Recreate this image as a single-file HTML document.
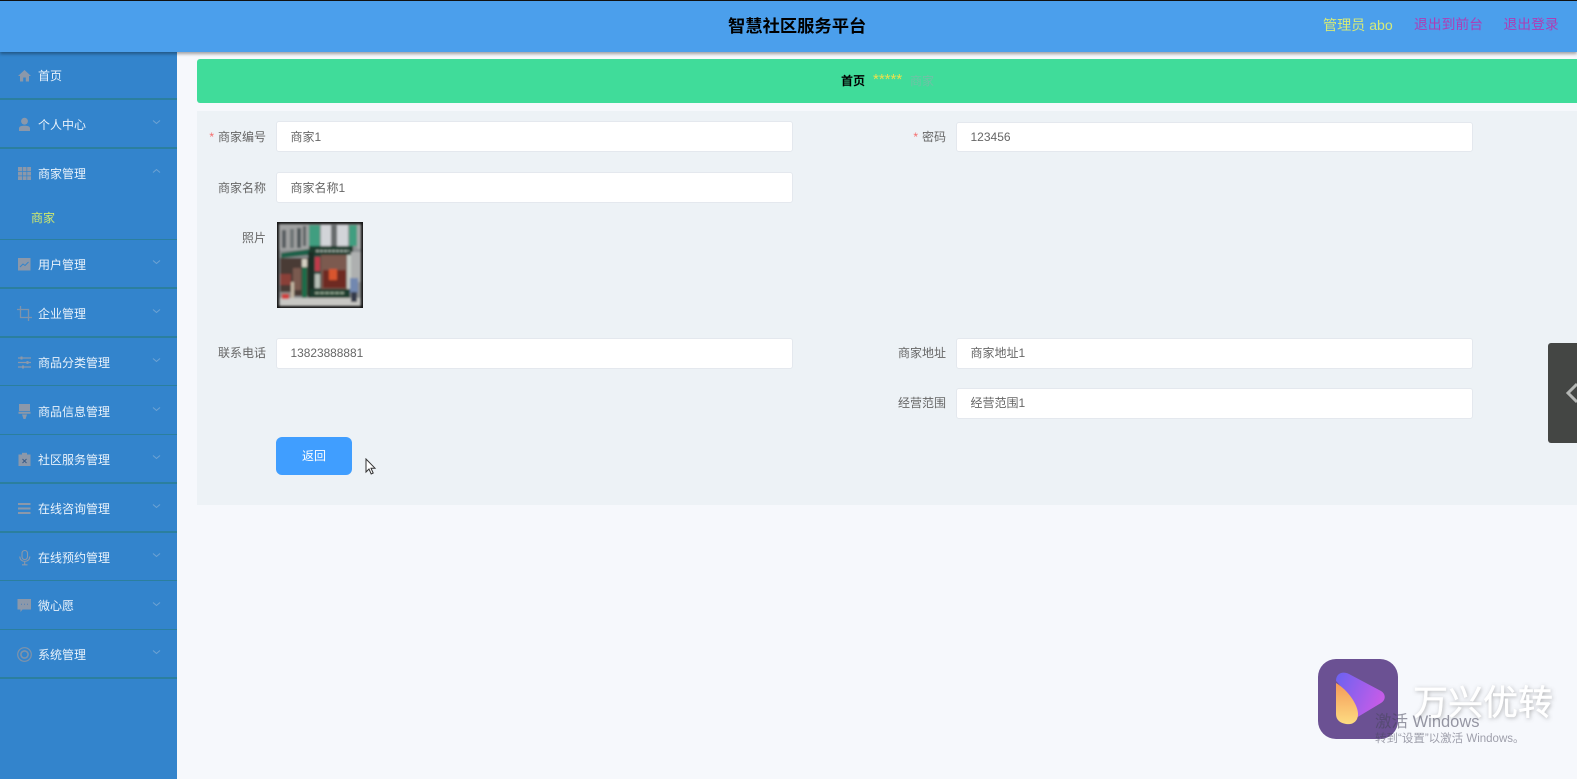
<!DOCTYPE html>
<html lang="zh"><head><meta charset="utf-8"><title>智慧社区服务平台</title>
<style>
*{box-sizing:border-box}
html,body{margin:0;padding:0;width:1577px;height:779px;overflow:hidden;background:#f6f8fc;font-family:"Liberation Sans","Noto Sans CJK SC",sans-serif}
.a{position:absolute;white-space:nowrap}
#hd{left:0;top:0;width:1577px;height:52px;background:#4b9fec;border-top:1px solid #111;box-shadow:0 2px 3px rgba(0,0,0,.35);z-index:3}
#sb{left:0;top:52px;width:177px;height:727px;background:#3384cc;z-index:2}
.sep{left:0;width:177px;height:1.5px;background:#2b7f9e;z-index:4}
.m{left:38px;color:#e9f2fb;font-size:12px;line-height:16px;z-index:4}
.ic{left:17px;width:15px;height:15px;z-index:4;overflow:visible}
.ch{left:151px;width:11px;height:6px;z-index:4}
.in{background:#fff;border:1px solid #e4e8ee;border-radius:3px;font-size:12px;color:#666;padding-left:13.500px;line-height:30px;height:31px;width:517px}
.lb{font-size:12px;color:#666;line-height:16px;text-align:right;width:80px}
.lb i{color:#f56c6c;font-style:normal;margin-right:4px}
</style></head><body>
<div class="a" id="hd"></div>
<div class="a" style="left:728px;top:13.500px;font-size:17.300px;font-weight:bold;color:#000;line-height:24px;z-index:5">智慧社区服务平台</div>
<div class="a" style="left:1323px;top:15px;font-size:14.100px;color:#d6ea78;line-height:20px;z-index:5">管理员 abo</div>
<div class="a" style="left:1414px;top:15px;font-size:13.800px;color:#ae3db5;line-height:20px;z-index:5">退出到前台</div>
<div class="a" style="left:1503.500px;top:15px;font-size:13.800px;color:#ae3db5;line-height:20px;z-index:5">退出登录</div>

<div class="a" id="sb"></div>
<div class="a sep" style="top:98px"></div>
<div class="a sep" style="top:147px"></div>
<div class="a sep" style="top:238.500px"></div>
<div class="a sep" style="top:287px"></div>
<div class="a sep" style="top:336px"></div>
<div class="a sep" style="top:384.500px"></div>
<div class="a sep" style="top:433.500px"></div>
<div class="a sep" style="top:482px"></div>
<div class="a sep" style="top:531px"></div>
<div class="a sep" style="top:579.500px"></div>
<div class="a sep" style="top:628.500px"></div>
<div class="a sep" style="top:677px"></div>

<div class="a m" style="top:68px">首页</div>
<div class="a m" style="top:117px">个人中心</div>
<div class="a m" style="top:165.500px">商家管理</div>
<div class="a m" style="top:209.500px;left:31px;color:#cfe96e">商家</div>
<div class="a m" style="top:257px">用户管理</div>
<div class="a m" style="top:306px">企业管理</div>
<div class="a m" style="top:354.500px">商品分类管理</div>
<div class="a m" style="top:403.500px">商品信息管理</div>
<div class="a m" style="top:452px">社区服务管理</div>
<div class="a m" style="top:501px">在线咨询管理</div>
<div class="a m" style="top:549.500px">在线预约管理</div>
<div class="a m" style="top:598px">微心愿</div>
<div class="a m" style="top:647px">系统管理</div>

<svg class="a ic" style="top:68px" viewBox="0 0 15 15" fill="#8b98aa"><path d="M7.500 2 1 8h2v5.500h3.200V9.500h2.600v4H12V8h2z"/></svg>
<svg class="a ic" style="top:117px" viewBox="0 0 15 15" fill="#8b98aa"><circle cx="7.500" cy="4.200" r="3.400"/><path d="M2 14v-2.500C2 9.500 4 8.800 7.500 8.800s5.500.7 5.500 2.700V14z"/></svg>
<svg class="a ic" style="top:166px" viewBox="0 0 15 15" fill="#8b98aa"><path d="M1 1h4v4H1zM5.700 1h3.800v4H5.700zM10.200 1H14v4h-3.800zM1 5.700h4v3.800H1zM5.700 5.700h3.800v3.800H5.700zM10.200 5.700H14v3.800h-3.800zM1 10.200h4V14H1zM5.700 10.200h3.800V14H5.700zM10.200 10.200H14V14h-3.800z"/></svg>
<svg class="a ic" style="top:257px" viewBox="0 0 15 15"><rect x="1" y="1" width="12.500" height="12.500" fill="#8b98aa"/><path d="M3 10l3-3 2 1.500 3.500-3.500" fill="none" stroke="#3384cc" stroke-width="1"/></svg>
<svg class="a ic" style="top:306px" viewBox="0 0 15 15" fill="none" stroke="#7f93aa" stroke-width="1.300"><path d="M3.500 0v11.500H15M0 3.500h11.500V15"/></svg>
<svg class="a ic" style="top:355px" viewBox="0 0 15 15" fill="none" stroke="#8b98aa" stroke-width="1.200"><path d="M1 3h13M1 7.500h13M1 12h13"/><path d="M4.500 1.500v3M10.500 6v3M6 10.500v3" stroke-width="2"/></svg>
<svg class="a ic" style="top:404px" viewBox="0 0 15 15" fill="#8b98aa"><path d="M2 0h11v7H2zM1.500 7.800h12v2h-12zM5 10.500h5L8.500 15h-2z"/></svg>
<svg class="a ic" style="top:452px" viewBox="0 0 15 15"><path d="M1.500 2.500h12V14h-12z" fill="#8b98aa"/><path d="M5 2.500V.8h5v1.700" fill="#8b98aa"/><path d="M5.500 7l4 4M9.500 7l-4 4" stroke="#3a5c88" stroke-width="1"/></svg>
<svg class="a ic" style="top:501px" viewBox="0 0 15 15" fill="#8b98aa"><path d="M1 2h12.500v2H1zM1 6.500h12.500v2H1zM1 11h12.500v2H1z"/></svg>
<svg class="a ic" style="top:550px" viewBox="0 0 15 15" fill="none" stroke="#8b98aa" stroke-width="1.100"><rect x="5" y=".5" width="5.500" height="9" rx="2.700"/><path d="M2.800 6.500c0 6.500 10 6.500 10 0M7.700 11.500v3M5 14.800h5.500"/></svg>
<svg class="a ic" style="top:598px" viewBox="0 0 15 15"><path d="M.5 1h13.500v10.500H5.500L3.500 14v-2.500H.5z" fill="#8b98aa"/><path d="M4 6.300h1M7 6.300h1M10 6.300h1" stroke="#4f7eb4" stroke-width="1"/></svg>
<svg class="a ic" style="top:647px" viewBox="0 0 15 15" fill="none" stroke="#7f93aa"><circle cx="7.500" cy="7.500" r="6.800" stroke-width="1.200"/><circle cx="7.500" cy="7.500" r="3.600" stroke-width="1.600"/></svg>

<svg class="a ch" style="top:119px" viewBox="0 0 11 6" fill="none" stroke="#6ea3d3"><path d="M2 1.500l3.500 3 3.500-3"/></svg>
<svg class="a ch" style="top:168px" viewBox="0 0 11 6" fill="none" stroke="#6ea3d3"><path d="M2 4.500l3.500-3 3.500 3"/></svg>
<svg class="a ch" style="top:259px" viewBox="0 0 11 6" fill="none" stroke="#6ea3d3"><path d="M2 1.500l3.500 3 3.500-3"/></svg>
<svg class="a ch" style="top:308px" viewBox="0 0 11 6" fill="none" stroke="#6ea3d3"><path d="M2 1.500l3.500 3 3.500-3"/></svg>
<svg class="a ch" style="top:357px" viewBox="0 0 11 6" fill="none" stroke="#6ea3d3"><path d="M2 1.500l3.500 3 3.500-3"/></svg>
<svg class="a ch" style="top:406px" viewBox="0 0 11 6" fill="none" stroke="#6ea3d3"><path d="M2 1.500l3.500 3 3.500-3"/></svg>
<svg class="a ch" style="top:454px" viewBox="0 0 11 6" fill="none" stroke="#6ea3d3"><path d="M2 1.500l3.500 3 3.500-3"/></svg>
<svg class="a ch" style="top:503px" viewBox="0 0 11 6" fill="none" stroke="#6ea3d3"><path d="M2 1.500l3.500 3 3.500-3"/></svg>
<svg class="a ch" style="top:552px" viewBox="0 0 11 6" fill="none" stroke="#6ea3d3"><path d="M2 1.500l3.500 3 3.500-3"/></svg>
<svg class="a ch" style="top:601px" viewBox="0 0 11 6" fill="none" stroke="#6ea3d3"><path d="M2 1.500l3.500 3 3.500-3"/></svg>
<svg class="a ch" style="top:649px" viewBox="0 0 11 6" fill="none" stroke="#6ea3d3"><path d="M2 1.500l3.500 3 3.500-3"/></svg>

<div class="a" style="left:197px;top:59px;width:1380px;height:44px;background:#40dc9a;border-radius:3px 0 0 3px"></div>
<div class="a" style="left:841px;top:73px;font-size:12px;font-weight:bold;color:#000;line-height:16px">首页</div>
<div class="a" style="left:873px;top:72px;font-size:15px;color:#e8e04e;line-height:16px">*****</div>
<div class="a" style="left:910px;top:73px;font-size:12px;color:#6fc2a6;line-height:16px">商家</div>

<div class="a" style="left:197px;top:111px;width:1380px;height:394px;background:#edf2f6"></div>

<div class="a lb" style="left:186px;top:129px"><i>*</i>商家编号</div>
<div class="a in" style="left:276px;top:121px">商家1</div>
<div class="a lb" style="left:866px;top:129px"><i>*</i>密码</div>
<div class="a in" style="left:956px;top:122px;height:30px;line-height:28px">123456</div>
<div class="a lb" style="left:186px;top:180px">商家名称</div>
<div class="a in" style="left:276px;top:171.500px">商家名称1</div>
<div class="a lb" style="left:186px;top:230px">照片</div>

<svg class="a" style="left:277px;top:222px" width="86" height="86" viewBox="0 0 86 86">
<defs><filter id="bl" x="-5%" y="-5%" width="110%" height="110%"><feGaussianBlur stdDeviation="1"/></filter></defs>
<rect width="86" height="86" fill="#151515"/>
<g filter="url(#bl)">
<rect x="2" y="2" width="82" height="82" fill="#8d9092"/>
<rect x="2" y="2" width="30" height="26" fill="#a0a2a2"/>
<rect x="5" y="8" width="4" height="18" fill="#565c5e"/><rect x="13" y="7" width="4" height="19" fill="#6e7476"/><rect x="20" y="6" width="4" height="20" fill="#4e5658"/><rect x="26" y="4" width="3" height="20" fill="#5a6062"/>
<rect x="32" y="3" width="11" height="21" fill="#3f9e80"/>
<rect x="44" y="3" width="10" height="21" fill="#d2d4d8"/>
<rect x="54" y="3" width="6" height="21" fill="#666a6c"/>
<rect x="60" y="3" width="11" height="21" fill="#d2d4d8"/>
<rect x="72" y="3" width="8" height="21" fill="#3f9e80"/>
<rect x="80" y="3" width="4" height="24" fill="#a8aaaa"/>
<rect x="32" y="24" width="44" height="9" fill="#1a3c2e"/>
<path d="M39 29h33" stroke="#9aa89e" stroke-width="2" stroke-dasharray="3 1"/>
<path d="M4 31 32 27V33L4 36z" fill="#1f6048"/>
<rect x="3" y="36" width="29" height="38" fill="#4a3a34"/>
<rect x="3" y="52" width="11" height="11" fill="#8a4038"/>
<rect x="16" y="46" width="8" height="22" fill="#7a5a50"/>
<rect x="25" y="42" width="5" height="34" fill="#1a6c4a"/>
<rect x="25" y="37" width="5" height="8" fill="#d6d2c4"/>
<rect x="31" y="30" width="6" height="46" fill="#1a2e28"/>
<rect x="37" y="33" width="7" height="43" fill="#2a4a40"/>
<rect x="38" y="35" width="5" height="14" fill="#c03a4c"/>
<rect x="38" y="52" width="5" height="14" fill="#b8c0b8"/>
<rect x="44" y="33" width="26" height="34" fill="#7c5a50"/>
<rect x="46" y="48" width="23" height="18" fill="#6e2c24"/>
<rect x="52" y="47" width="8" height="11" fill="#d8552e"/>
<rect x="70" y="33" width="4" height="34" fill="#c6ccc6"/>
<rect x="74" y="30" width="10" height="30" fill="#aeb0b0"/>
<rect x="33" y="67" width="40" height="9" fill="#1a3c2e"/>
<path d="M38 71h30" stroke="#8fa48e" stroke-width="2" stroke-dasharray="4 1"/>
<rect x="3" y="70" width="14" height="8" fill="#8e8a86"/>
<rect x="3" y="76" width="80" height="8" fill="#c8c8c4"/>
<rect x="5" y="72" width="7" height="5" fill="#d03c3c"/>
<rect x="14" y="60" width="3" height="16" fill="#c4b8a4"/>
<rect x="73" y="56" width="8" height="15" fill="#7288b0"/>
<rect x="74" y="70" width="6" height="10" fill="#33394a"/>
</g>
</svg>

<div class="a lb" style="left:186px;top:345px">联系电话</div>
<div class="a in" style="left:276px;top:337.500px;line-height:29px;font-size:11.900px">13823888881</div>
<div class="a lb" style="left:866px;top:345px">商家地址</div>
<div class="a in" style="left:956px;top:337.500px;line-height:29px">商家地址1</div>
<div class="a lb" style="left:866px;top:395px">经营范围</div>
<div class="a in" style="left:956px;top:387.500px;line-height:29px">经营范围1</div>

<div class="a" style="left:276px;top:437px;width:76px;height:38px;background:#409eff;border-radius:6px;color:#fff;font-size:12px;line-height:38px;text-align:center">返回</div>
<svg class="a" style="left:365px;top:458px" width="12" height="18" viewBox="0 0 12 18"><path d="M1 1v13l3-3 2.200 5 2-1-2.200-4.800h4z" fill="#fff" stroke="#333" stroke-width="1"/></svg>

<div class="a" style="left:1548px;top:343px;width:29px;height:100px;background:#444644;border-radius:3px 0 0 3px"></div>
<svg class="a" style="left:1565px;top:382px" width="12" height="22" viewBox="0 0 12 22" fill="none" stroke="#b4b6b4" stroke-width="3"><path d="M12 2 3 11l9 9"/></svg>

<div class="a" style="left:1318px;top:659px;width:80px;height:80px;border-radius:18px;background:#6b5193"></div>
<svg class="a" style="left:1334px;top:672px" width="52" height="54" viewBox="0 0 52 54">
<defs><linearGradient id="g1" x1="0" y1="0" x2="1" y2="0.400"><stop offset="0" stop-color="#6a62f0"/><stop offset="1" stop-color="#c45ce8"/></linearGradient>
<linearGradient id="g2" x1="0" y1="0" x2="0" y2="1"><stop offset="0" stop-color="#f59a58"/><stop offset="1" stop-color="#fddc82"/></linearGradient></defs>
<path d="M2 9C2 1 9-1 15 2L47 19c5 3 5 9 0 12L22 46C16 30 8 14 2 9z" fill="url(#g1)"/>
<path d="M2 11C14 18 24 33 24 42c0 8-6 11-12 10C6 51 2 48 2 42z" fill="url(#g2)"/>
</svg>
<div class="a" style="left:1413px;top:681px;font-size:35px;line-height:46px;color:#fff;text-shadow:1px 1px 4px rgba(90,90,90,.5);font-weight:normal;-webkit-text-stroke:.5px #fff">万兴优转</div>
<div class="a" style="left:1375px;top:711px;font-size:16.500px;line-height:22px;color:rgba(70,70,90,.55)">激活 Windows</div>
<div class="a" style="left:1375px;top:731px;font-size:11.500px;line-height:17px;color:rgba(70,70,90,.5)">转到“设置”以激活 Windows。</div>
</body></html>
